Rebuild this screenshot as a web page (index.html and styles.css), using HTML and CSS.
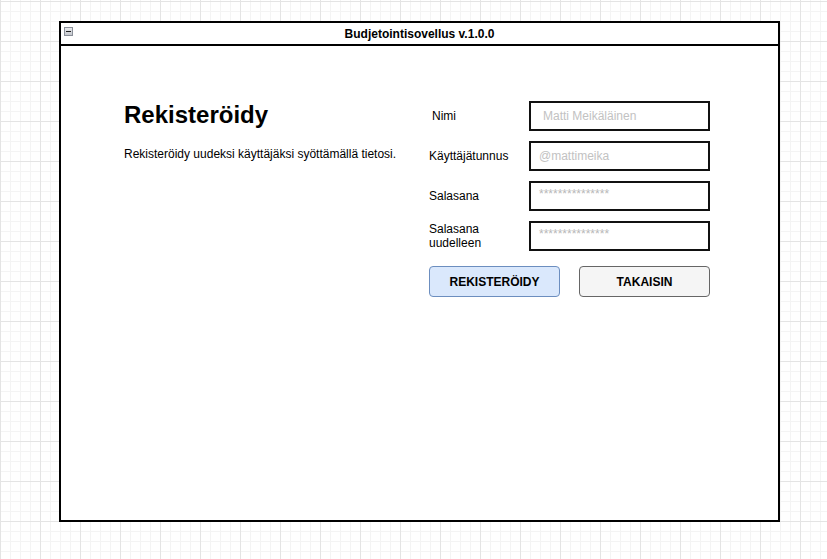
FILE: index.html
```html
<!DOCTYPE html>
<html lang="fi">
<head>
<meta charset="utf-8">
<title>Budjetointisovellus</title>
<link rel="stylesheet" href="styles.css">
</head>
<body>
<div class="window">
  <div class="titlebar">
    <div class="titlebar-left"><span class="min-btn"><span class="min-bar"></span></span></div>
    <div class="title">Budjetointisovellus v.1.0.0</div>
    <div></div>
  </div>
  <div class="content">
    <div class="intro">
      <h1 class="heading">Rekisteröidy</h1>
      <p class="lead">Rekisteröidy uudeksi käyttäjäksi syöttämällä tietosi.</p>
    </div>
    <div class="form">
      <div class="fields">
        <div class="label label-indent">Nimi</div>
        <div class="input input-indent">Matti Meikäläinen</div>
        <div class="label">Käyttäjätunnus</div>
        <div class="input">@mattimeika</div>
        <div class="label">Salasana</div>
        <div class="input input-pass">***************</div>
        <div class="label">Salasana<br>uudelleen</div>
        <div class="input input-pass">***************</div>
      </div>
      <div class="buttons">
        <div class="btn btn-primary">REKISTERÖIDY</div>
        <div class="btn btn-secondary">TAKAISIN</div>
      </div>
    </div>
  </div>
</div>
</body>
</html>
```
FILE: styles.css
```css
* { box-sizing: border-box; }
html, body { margin: 0; padding: 0; }
body {
  width: 827px;
  height: 559px;
  overflow: hidden;
  font-family: "Liberation Sans", Arial, sans-serif;
  color: #000;
  background-color: #fff;
  background-image:
    linear-gradient(to right, #e4e4e4 1px, transparent 1px),
    linear-gradient(to bottom, #e4e4e4 1px, transparent 1px),
    linear-gradient(to right, #f4f4f4 1px, transparent 1px),
    linear-gradient(to bottom, #f4f4f4 1px, transparent 1px);
  background-size: 40px 40px, 40px 40px, 10px 10px, 10px 10px;
  background-position: 0 1px, 0 1px, 0 1px, 0 1px;
  padding: 21px 0 0 59px;
}
.window {
  width: 721px;
  height: 501px;
  border: 2px solid #000;
  background: #fff;
  display: flex;
  flex-direction: column;
}
.titlebar {
  height: 23px;
  border-bottom: 2px solid #000;
  display: grid;
  grid-template-columns: 1fr auto 1fr;
  align-items: center;
}
.titlebar-left {
  display: flex;
  align-items: flex-start;
  height: 100%;
  padding: 4px 0 0 3px;
}
.min-btn {
  width: 9px;
  height: 9px;
  border: 1px solid #8a8f99;
  background: linear-gradient(#e8e9ec, #c4c7cd);
  display: flex;
  align-items: center;
  justify-content: center;
}
.min-bar {
  width: 5px;
  height: 1px;
  background: #222;
}
.title {
  font-size: 12px;
  font-weight: bold;
  line-height: 14px;
  padding-top: 1px;
}
.content {
  flex: 1;
  display: flex;
  padding: 54px 0 0 63px;
}
.intro {
  width: 305px;
}
.heading {
  margin: 0;
  padding-top: 1px;
  font-size: 24px;
  line-height: 28px;
  font-weight: bold;
}
.lead {
  margin: 18px 0 0 0;
  font-size: 12px;
  line-height: 14px;
}
.form {
  padding-top: 1px;
}
.fields {
  display: grid;
  grid-template-columns: 100px 181px;
  grid-auto-rows: 30px;
  row-gap: 10px;
}
.label {
  font-size: 12px;
  line-height: 14px;
  display: flex;
  align-items: center;
  padding-left: 0;
}
.label-indent { padding-left: 3px; }
.input {
  border: 2px solid #111;
  font-size: 12px;
  color: #c2c2c2;
  display: flex;
  align-items: center;
  padding-left: 8px;
}
.input-indent { padding-left: 12px; }
.input-pass {
  font-size: 12px;
  color: #b8b8b8;
  align-items: center;
  padding-bottom: 4px;
}
.buttons {
  display: flex;
  gap: 19px;
  margin-top: 15px;
}
.btn {
  width: 131px;
  height: 31px;
  border-radius: 4px;
  border: 1px solid;
  display: flex;
  align-items: center;
  justify-content: center;
  font-size: 12px;
  font-weight: bold;
}
.btn-primary {
  background: #dae8fc;
  border-color: #6c8ebf;
}
.btn-secondary {
  background: #f5f5f5;
  border-color: #666;
}
```
